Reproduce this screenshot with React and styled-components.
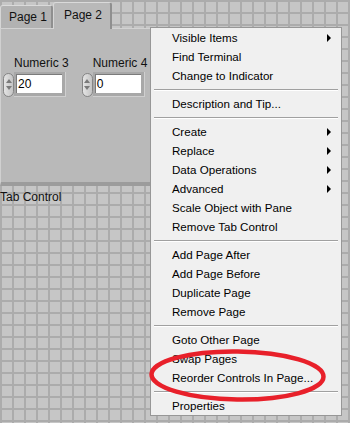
import React from 'react'
import styled, { createGlobalStyle } from 'styled-components'

const GlobalStyle = createGlobalStyle`
  html, body { margin: 0; padding: 0; }
  body { font-family: "Liberation Sans", Arial, sans-serif; }
`

const Canvas = styled.div`
  position: relative;
  width: 350px;
  height: 423px;
  overflow: hidden;
  background-color: #c6c6c6;
  background-image:
    linear-gradient(to right, #acacac 2px, transparent 2px),
    linear-gradient(to bottom, #acacac 2px, transparent 2px);
  background-size: 12px 12px;
  background-position: 0 0;
`

const TabControl = styled.div`
  display: flex;
  flex-direction: column;
  width: 172px;
`

const TabStrip = styled.div`
  display: flex;
  align-items: flex-end;
  height: 28px;
`

const Tab = styled.div`
  box-sizing: border-box;
  width: ${({ $w }) => $w}px;
  height: ${({ $active }) => ($active ? 27 : 23)}px;
  display: flex;
  align-items: center;
  padding-left: ${({ $active }) => ($active ? 10 : 8)}px;
  padding-bottom: ${({ $active }) => ($active ? 2 : 0)}px;
  font-size: 12px;
  color: #111;
  background: ${({ $active }) => ($active ? '#b9b9b9' : '#b2b2b2')};
  border-top: 1px solid #dadada;
  border-left: 1px solid #d6d6d6;
  border-right: 2px solid #8f8f8f;
  border-radius: 3px 3px 0 0;
  margin-bottom: ${({ $active }) => ($active ? -1 : 0)}px;
  position: relative;
  z-index: ${({ $active }) => ($active ? 1 : 0)};
`

const Body = styled.div`
  box-sizing: border-box;
  height: 158px;
  background: #b9b9b9;
  border-top: 1px solid #d2d2d2;
  border-left: 1px solid #d0d0d0;
  border-bottom: 4px solid #9c9c9c;
  padding: 27px 0 0 2px;
  display: flex;
  gap: 13px;
  align-items: flex-start;
`

const Control = styled.div`
  display: flex;
  flex-direction: column;
  gap: 2px;
`

const ControlLabel = styled.div`
  margin-left: 11px;
  font-size: 12px;
  line-height: 14px;
  color: #111;
`

const ControlRow = styled.div`
  display: flex;
  align-items: center;
`

const Spinner = styled.div`
  box-sizing: border-box;
  width: 11px;
  height: 24px;
  border: 1px solid #858585;
  border-radius: 6px;
  background: linear-gradient(to right, #e4e4e4, #c4c4c4);
  display: flex;
  flex-direction: column;
  align-items: center;
  justify-content: center;
  gap: 3px;
`

const Arrow = styled.div`
  width: 0;
  height: 0;
  border-left: 3px solid transparent;
  border-right: 3px solid transparent;
  ${({ $up }) => ($up ? 'border-bottom: 4px solid #7a7a7a;' : 'border-top: 4px solid #7a7a7a;')}
`

const Field = styled.div`
  box-sizing: border-box;
  width: 52px;
  height: 25px;
  background: #a8a8a8;
  padding: 2px 3px 3px 2px;
  border-right: 1px solid #cfcfcf;
  border-bottom: 1px solid #cfcfcf;
`

const FieldInner = styled.div`
  box-sizing: border-box;
  height: 100%;
  background: #fff;
  border-top: 1px solid #7b7b7b;
  border-left: 1px solid #7b7b7b;
  font-size: 12px;
  line-height: 18px;
  padding-left: 1px;
  color: #000;
`

const CanvasLabel = styled.div`
  margin-top: 4px;
  font-size: 12px;
  line-height: 14px;
  color: #111;
`

const Menu = styled.div`
  position: absolute;
  left: 150px;
  top: 27px;
  width: 192px;
  box-sizing: border-box;
  background: #f0f0f0;
  border: 1px solid #979797;
  display: flex;
  flex-direction: column;
  z-index: 2;
`

const Item = styled.div`
  height: 19px;
  display: flex;
  align-items: center;
  justify-content: space-between;
  padding: 0 10px 0 21px;
  font-size: 11.6px;
  color: #000;
  white-space: nowrap;
`

const SubArrow = styled.span`
  width: 0;
  height: 0;
  border-top: 4px solid transparent;
  border-bottom: 4px solid transparent;
  border-left: 4px solid #000;
`

const Separator = styled.div`
  height: 9px;
  display: flex;
  align-items: center;
  padding: 0 3px;
  &::after {
    content: '';
    flex: 1;
    height: 1px;
    background: #a0a0a0;
    box-shadow: 0 1px 0 #ffffff;
  }
`

const Annotation = styled.svg`
  position: absolute;
  left: 0;
  top: 0;
  width: 350px;
  height: 423px;
  pointer-events: none;
  z-index: 3;
`

const menu = [
  ['Visible Items', true],
  ['Find Terminal'],
  ['Change to Indicator'],
  '-',
  ['Description and Tip...'],
  '-',
  ['Create', true],
  ['Replace', true],
  ['Data Operations', true],
  ['Advanced', true],
  ['Scale Object with Pane'],
  ['Remove Tab Control'],
  '-',
  ['Add Page After'],
  ['Add Page Before'],
  ['Duplicate Page'],
  ['Remove Page'],
  '-',
  ['Goto Other Page'],
  ['Swap Pages'],
  ['Reorder Controls In Page...'],
  '-',
  ['Properties'],
]

function Numeric({ label, value }) {
  return (
    <Control>
      <ControlLabel>{label}</ControlLabel>
      <ControlRow>
        <Spinner>
          <Arrow $up />
          <Arrow />
        </Spinner>
        <Field>
          <FieldInner>{value}</FieldInner>
        </Field>
      </ControlRow>
    </Control>
  )
}

export default function App() {
  return (
    <Canvas>
      <GlobalStyle />
      <TabControl>
        <TabStrip>
          <Tab $w={53}>Page 1</Tab>
          <Tab $w={59} $active>Page 2</Tab>
        </TabStrip>
        <Body>
          <Numeric label="Numeric 3" value="20" />
          <Numeric label="Numeric 4" value="0" />
        </Body>
        <CanvasLabel>Tab Control</CanvasLabel>
      </TabControl>

      <Menu>
        {menu.map((m, i) =>
          m === '-' ? (
            <Separator key={i} />
          ) : (
            <Item key={i}>
              <span>{m[0]}</span>
              {m[1] && <SubArrow />}
            </Item>
          )
        )}
      </Menu>

      <Annotation viewBox="0 0 350 423">
        <ellipse cx="237.5" cy="375.5" rx="86" ry="24" fill="none" stroke="#e8202a" strokeWidth="4.5" transform="rotate(0.8 237.5 375.5)" />
      </Annotation>
    </Canvas>
  )
}
